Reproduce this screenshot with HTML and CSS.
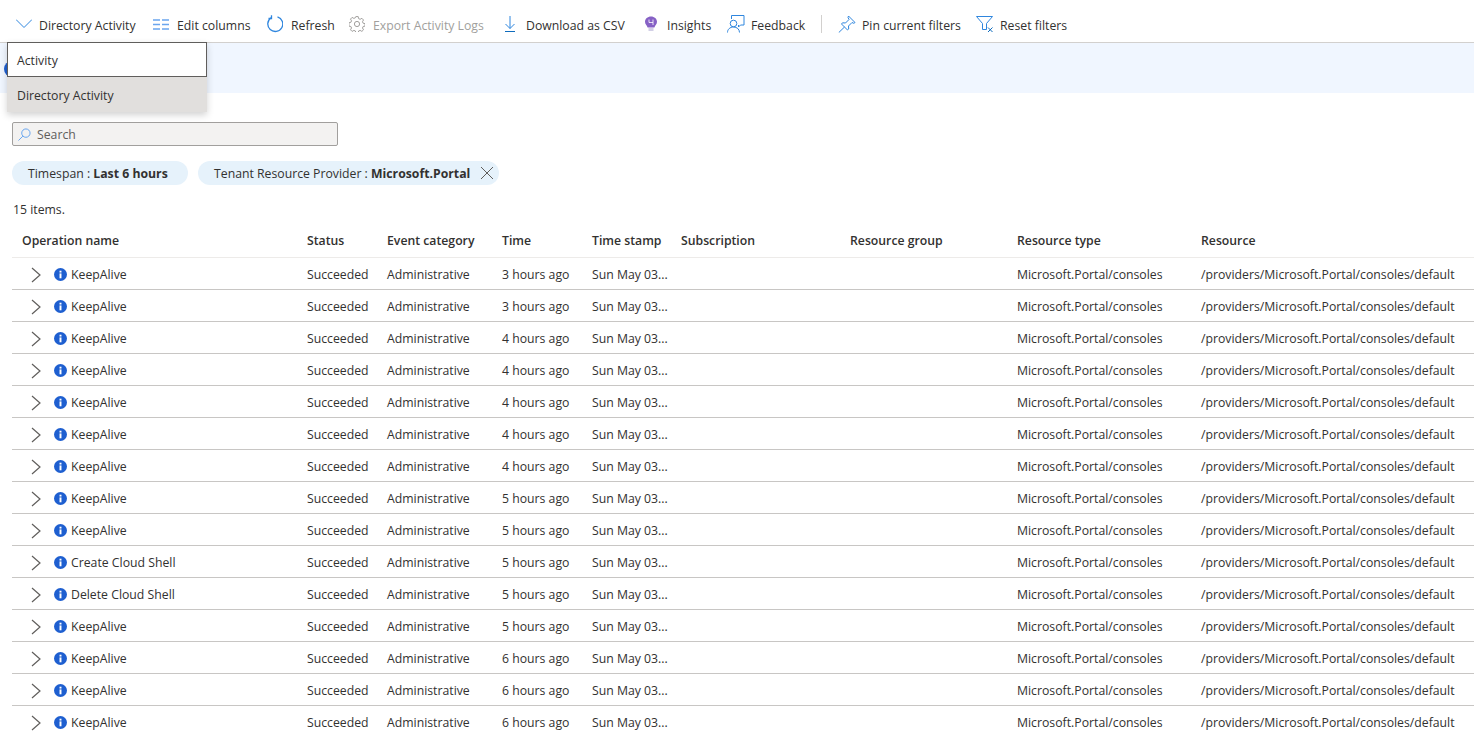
FILE: index.html
```html
<!DOCTYPE html>
<html lang="en">
<head>
<meta charset="utf-8">
<title>Activity Log</title>
<link rel="stylesheet" href="styles.css">
</head>
<body>
<div class="toolbar">
  <button class="tool tool-scope"><svg class="ic i16" viewBox="0 0 16 16"><path d="M0 3.500 8 11.500 16 3.500" class="s"/></svg><span>Directory Activity</span></button>
  <button class="tool tool-edit"><svg class="ic i16" viewBox="0 0 16 16"><path d="M0 4H7M0 8.500H7M0 13H7M9 4H16M9 8.500H16M9 13H16" class="s s-light"/></svg><span>Edit columns</span></button>
  <button class="tool tool-refresh"><svg class="ic i16 tall" viewBox="0 0 16 18"><path d="M10.500 1.800A7.500 7.500 0 1 1 4 2.800" class="s s-thick"/><path d="M4.500 .3 4.500 3.500 1.500 3.500" class="s s-thick"/></svg><span>Refresh</span></button>
  <button class="tool tool-export off"><svg class="ic i16" viewBox="0 0 16 16"><circle cx="8" cy="8" r="2.600" class="g"/><path d="M6.800 .6h2.400l.4 2 1.500.7 1.800-1 1.600 1.700-1 1.700.6 1.500 2 .5v2.400l-2 .4-.6 1.500 1 1.800-1.600 1.600-1.800-1-1.500.6-.4 2H6.800l-.4-2-1.500-.6-1.800 1-1.600-1.600 1-1.800-.6-1.500-2-.4V6.800l2-.5.6-1.500-1-1.700 1.600-1.700 1.800 1 1.500-.7z" class="g"/></svg><span>Export Activity Logs</span></button>
  <button class="tool tool-csv"><svg class="ic i16" viewBox="0 0 16 16"><path d="M7 0V12.500M2.500 8 7 12.500 11.500 8" class="s"/><path d="M2 15.500H12" class="s s-dark"/></svg><span>Download as CSV</span></button>
  <button class="tool tool-insights"><svg class="ic i16" viewBox="0 0 16 16"><path d="M7 .5C3.600.5 1 2.800 1 5.800c0 2.600 2 3.500 2.600 5.700h6.800C11 9.300 13 8.400 13 5.800 13 2.800 10.400.5 7 .5z" fill="#8661c5"/><path d="M5 3.500V6.500H9M9 3.500V9" class="w"/><rect x="4.500" y="12" width="5" height="3" fill="#d2cfe6"/></svg><span>Insights</span></button>
  <button class="tool tool-feedback"><svg class="ic i18" viewBox="0 0 18 18"><path d="M4.500 4V.5H17V10H13.500L11.500 12V10" class="s"/><circle cx="6.500" cy="8.500" r="3.300" class="s"/><path d="M.5 17.500C.5 14.300 3 12 6.500 12S12.500 14.300 12.500 17.500" class="s"/></svg><span>Feedback</span></button>
  <i class="sep"></i>
  <button class="tool tool-pin"><svg class="ic i18" viewBox="0 0 18 18"><path d="M10.500 1 17 7.500 15.800 8.300 14 7.500 10.500 11 10.700 14 9.500 15 3.500 9 4.500 7.800 7.500 8 11 4.500 10 2.500zM6.500 12 .8 17.500" class="s"/></svg><span>Pin current filters</span></button>
  <button class="tool tool-reset"><svg class="ic i18" viewBox="0 0 18 18"><path d="M.5 1.500H16.500L10.500 8.500V14.500H6.500V8.500Z" class="s"/><path d="M12 12.500 16.500 17M16.500 12.500 12 17" class="s s-dark"/></svg><span>Reset filters</span></button>
</div>
<div class="banner"><span class="banner-dot"></span></div>
<div class="menu">
  <div class="menu-item menu-current">Activity</div>
  <div class="menu-item menu-hover">Directory Activity</div>
</div>
<div class="search"><svg class="search-ic" viewBox="0 0 14 14"><circle cx="8.500" cy="5.500" r="4.500" class="s s-search"/><path d="M5.200 8.800 .5 13.500" class="s s-search"/></svg><span>Search</span></div>
<div class="pills">
  <div class="pill pill-time">Timespan : <b>Last 6 hours</b></div>
  <div class="pill pill-prov">Tenant Resource Provider : <b>Microsoft.Portal</b><svg class="pill-x" viewBox="0 0 14 14"><path d="M1 1 13 13M13 1 1 13"/></svg></div>
</div>
<div class="count">15 items.</div>
<div class="grid">
  <div class="row head"><div>Operation name</div><div>Status</div><div>Event category</div><div>Time</div><div>Time stamp</div><div>Subscription</div><div>Resource group</div><div>Resource type</div><div>Resource</div></div>
  <div id="rows"></div>
</div>
<script src="app.js"></script>
</body>
</html>
```
FILE: app.js
```js
var data = [
  ["KeepAlive", 3], ["KeepAlive", 3], ["KeepAlive", 4], ["KeepAlive", 4], ["KeepAlive", 4],
  ["KeepAlive", 4], ["KeepAlive", 4], ["KeepAlive", 5], ["KeepAlive", 5], ["Create Cloud Shell", 5],
  ["Delete Cloud Shell", 5], ["KeepAlive", 5], ["KeepAlive", 6], ["KeepAlive", 6], ["KeepAlive", 6]
];
document.getElementById("rows").innerHTML = data.map(function (d) {
  return '<div class="row item"><div class="op">' +
    '<svg class="chev" viewBox="0 0 10 16"><path d="M1 1 9 8 1 15"/></svg>' +
    '<svg class="info" viewBox="0 0 12 12"><circle cx="6" cy="6" r="6" fill="#1e5fd0"/><rect x="5.100" y="5" width="1.800" height="4.500" fill="#fff"/><rect x="5.100" y="2.500" width="1.800" height="1.700" fill="#fff"/></svg>' +
    '<span>' + d[0] + '</span></div>' +
    '<div>Succeeded</div><div>Administrative</div><div>' + d[1] + ' hours ago</div><div>Sun May 03...</div><div></div><div></div>' +
    '<div>Microsoft.Portal/consoles</div><div>/providers/Microsoft.Portal/consoles/default</div></div>';
}).join("");
```
FILE: styles.css
```css
* { box-sizing: border-box; }
html, body { margin: 0; padding: 0; height: 736px; overflow: hidden; background: #fff; }
body { font-family: "Open Sans", "Noto Sans", "Liberation Sans", sans-serif; font-size: 12.25px; color: #323130; position: relative; }
.toolbar { height: 43px; border-bottom: 1px solid #d2d0ce; display: flex; align-items: center; padding: 9px 0 0 16px; }
.tool { border: 0; background: none; padding: 0; margin: 0; font: inherit; color: #323130; display: flex; align-items: center; white-space: nowrap; flex: none; }
.tool.off { color: #a19f9d; }
.ic { flex: none; display: block; margin-bottom: 3px; }
.i16 { width: 16px; height: 16px; margin-right: 7px; }
.i16.tall { height: 18px; }
.i18 { width: 18px; height: 18px; margin-right: 6px; }
.s { fill: none; stroke: #2f86de; stroke-width: 1; }
.s-thick { stroke-width: 1.300; }
.s-light { stroke: #6aa5ee; stroke-width: 1.500; }
.s-dark { stroke: #0f6cbd; }
.s-search { stroke: #5ea0ef; }
.g { fill: none; stroke: #a19f9d; stroke-width: 1; }
.w { fill: none; stroke: #fff; stroke-width: .8; }
.tool-scope { width: 137px; }
.tool-edit { width: 114px; }
.tool-edit .ic, .tool-refresh .ic, .tool-export .ic { margin-right: 8px; }
.tool-refresh { width: 82px; }
.tool-export { width: 154px; }
.tool-csv { width: 141px; }
.tool-insights { width: 83px; }
.tool-feedback { width: 94px; }
.sep { width: 1px; height: 18px; background: #d2d0ce; margin: 0 16px 3px 0; flex: none; }
.tool-pin { width: 138px; }
.banner { height: 50px; background: #f0f6ff; position: relative; }
.banner-dot { position: absolute; left: 4px; top: 18px; width: 16px; height: 16px; border-radius: 50%; background: #1e5fd0; }
.menu { position: absolute; left: 7px; top: 42px; width: 200px; height: 70px; background: #e1dfdd; box-shadow: 0 3px 7px rgba(0,0,0,.18); }
.menu-item { height: 35px; padding: 2px 0 0 10px; display: flex; align-items: center; }
.menu-current { background: #fff; border: 1px solid #605e5c; padding-left: 9px; }
.search { width: 326px; height: 24px; margin: 29px 0 0 12px; background: #f3f2f1; border: 1px solid #a19f9d; border-radius: 2px; display: flex; align-items: center; padding-left: 5px; color: #605e5c; }
.search-ic { width: 13px; height: 13px; margin-right: 6px; }
.pills { display: flex; gap: 10px; margin: 15px 0 0 12px; }
.pill { height: 24px; border-radius: 12px; background: #e6f2fb; display: flex; align-items: center; padding-left: 16px; white-space: pre; }
.pill b { font-weight: 700; }
.pill-time { width: 176px; }
.pill-prov { width: 301px; }
.pill-x { width: 14px; height: 14px; margin-left: 10px; fill: none; stroke: #605e5c; stroke-width: 1; }
.count { margin: 16px 0 0 13px; height: 17px; line-height: 17px; }
.grid { margin: 7px 0 0 12px; width: 1462px; }
.row { display: grid; grid-template-columns: 295px 80px 115px 90px 89px 169px 167px 184px 1fr; align-items: center; white-space: nowrap; }
.head { height: 33px; padding-bottom: 1px; font-weight: 600; border-bottom: 1px solid #edebe9; }
.head > div:first-child { padding-left: 10px; }
.item { height: 32px; padding-top: 2px; border-bottom: 1px solid #c8c6c4; }
.op { display: flex; align-items: center; padding-left: 19px; }
.chev { width: 10px; height: 16px; fill: none; stroke: #605e5c; stroke-width: 1.200; margin-right: 13px; }
.info { width: 13px; height: 13px; margin-right: 4px; }
```
